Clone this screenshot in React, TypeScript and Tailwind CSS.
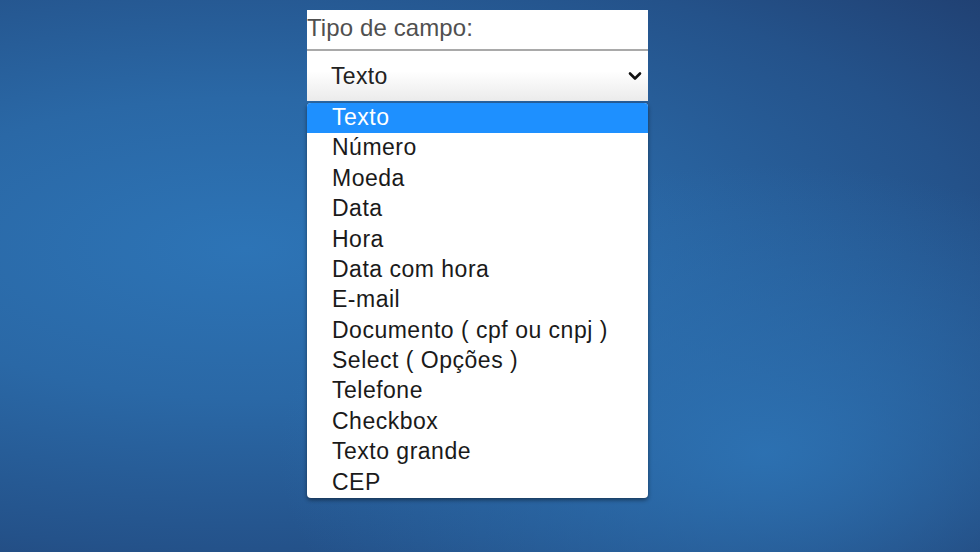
const options = [
  'Texto',
  'Número',
  'Moeda',
  'Data',
  'Hora',
  'Data com hora',
  'E-mail',
  'Documento ( cpf ou cnpj )',
  'Select ( Opções )',
  'Telefone',
  'Checkbox',
  'Texto grande',
  'CEP',
]

export default function App() {
  return (
    <div className="relative h-[552px] w-[980px] overflow-hidden bg-[radial-gradient(ellipse_at_25%_45%,#2d74b6_0%,#2a68a6_35%,#24528a_70%,#1f3a6a_100%)] font-['Liberation_Sans',Arial,sans-serif]">
      <div className="pointer-events-none absolute inset-0 bg-[radial-gradient(ellipse_at_78%_82%,rgba(46,118,184,0.85)_0%,rgba(46,118,184,0)_45%)]" />
      <div className="relative ml-[307px] mt-[10px] flex w-[341px] flex-col">
        <div className="flex h-[39px] items-center bg-white pb-[3px] text-[24px] leading-none tracking-[0.1px] text-[#505050]">
          Tipo de campo:
        </div>
        <div className="h-[2px] bg-[#a9a9a9]" />
        <div className="flex h-[50px] items-center justify-between bg-gradient-to-b from-white from-40% to-[#ebebeb] pl-[24px] pr-[6px] text-[23px] text-[#222]">
          <span className="tracking-[0.3px]">Texto</span>
          <svg width="14" height="10" viewBox="0 0 14 10" fill="none">
            <path d="M2 2.5 L7 7.5 L12 2.5" stroke="#111" strokeWidth="2.6" strokeLinecap="round" strokeLinejoin="round" />
          </svg>
        </div>
        <div className="mt-[2px] overflow-hidden rounded-[4px] bg-white shadow-[0_2px_4px_rgba(0,0,0,0.45)]">
          {options.map((o, i) => (
            <div
              key={o}
              className={
                i === 0
                  ? 'flex h-[30.4px] items-center bg-[#1e90ff] pb-[2px] pl-[25px] text-[23px] tracking-[0.5px] text-white'
                  : 'flex h-[30.4px] items-center pb-[2px] pl-[25px] text-[23px] tracking-[0.5px] text-[#1a1a1a]'
              }
            >
              {o}
            </div>
          ))}
        </div>
      </div>
    </div>
  )
}
